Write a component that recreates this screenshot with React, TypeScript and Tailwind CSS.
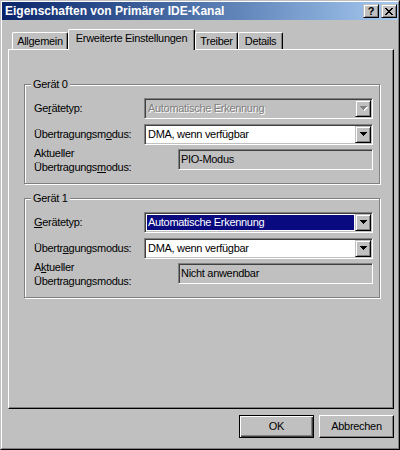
import type { ReactNode } from "react";

const sunken =
  "border border-t-[#808080] border-l-[#808080] border-r-white border-b-white shadow-[inset_1px_1px_0_#404040,inset_-1px_-1px_0_#c0c0c0]";
const raised =
  "border border-t-[#c0c0c0] border-l-[#c0c0c0] border-r-black border-b-black shadow-[inset_1px_1px_0_#fff,inset_-1px_-1px_0_#808080]";

function Arrow({ disabled }: { disabled?: boolean }) {
  const d = "M0 0h7v1H0zM1 1h5v1H1zM2 2h3v1H2zM3 3h1v1H3z";
  return (
    <svg width="8" height="5" viewBox="0 0 8 5" className="ml-px">
      {disabled && <path d={d} fill="#fff" transform="translate(1 1)" />}
      <path d={d} fill={disabled ? "#808080" : "#000"} />
    </svg>
  );
}

function Combo({ text, disabled, selected }: { text: string; disabled?: boolean; selected?: boolean }) {
  return (
    <div className={`flex h-[21px] w-[229px] ${sunken} ${disabled ? "bg-[#c0c0c0]" : "bg-white"}`}>
      <div className="flex flex-1 items-stretch my-[2px] ml-[2px] mr-[1px]">
        <div
          className={`flex flex-1 items-center pl-px ${
            selected ? "bg-[#0a0a80] text-white" : disabled ? "text-[#808080] [text-shadow:1px_1px_0_#fff]" : "text-black"
          }`}
        >
          {text}
        </div>
      </div>
      <div className={`w-[16px] my-px mr-px flex items-center justify-center bg-[#c0c0c0] ${raised}`}>
        <Arrow disabled={disabled} />
      </div>
    </div>
  );
}

function Field({ text }: { text: string }) {
  return (
    <div className={`flex h-[21px] w-[195px] items-center pl-[2px] bg-[#c0c0c0] ${sunken}`}>{text}</div>
  );
}

function Row({ label, children }: { label: ReactNode; children: ReactNode }) {
  return (
    <div className="flex h-[21px] items-center">
      <div className="w-[110px] shrink-0 leading-[13px]">{label}</div>
      {children}
    </div>
  );
}

function Group({
  title,
  typ,
  modus,
  akt,
  selected,
  disabled,
  value,
}: {
  title: string;
  typ: ReactNode;
  modus: ReactNode;
  akt: ReactNode;
  selected?: boolean;
  disabled?: boolean;
  value: string;
}) {
  return (
    <div className="relative h-[100px] border border-[#808080] shadow-[inset_1px_1px_0_#fff,1px_1px_0_#fff] pl-[9px] pt-[13px] flex flex-col">
      <div className="absolute -top-[8px] left-[6px] px-[2px] bg-[#c0c0c0] leading-[14px]">{title}</div>
      <Row label={typ}>
        <Combo text="Automatische Erkennung" disabled={disabled} selected={selected} />
      </Row>
      <div className="mt-[5px]">
        <Row label={modus}>
          <Combo text="DMA, wenn verfügbar" />
        </Row>
      </div>
      <div className="mt-[4px] flex h-[21px] items-center">
        <div className="w-[144px] shrink-0 leading-[14px]">{akt}</div>
        <Field text={value} />
      </div>
    </div>
  );
}

function Tab({ label, w, active }: { label: string; w: string; active?: boolean }) {
  return (
    <div
      className={`${w} ${
        active ? "h-[21px] -mb-px relative z-10 pb-[3px]" : "h-[17px] pt-px"
      } flex items-center justify-center bg-[#c0c0c0] rounded-t-[2px] border-t border-l border-r border-t-white border-l-white border-r-black shadow-[inset_-1px_0_0_#808080]`}
    >
      {label}
    </div>
  );
}

function Button({ label, def }: { label: string; def?: boolean }) {
  return (
    <div
      className={`w-[75px] h-[23px] flex items-center justify-center bg-[#c0c0c0] ${
        def
          ? "border border-black shadow-[inset_1px_1px_0_#fff,inset_-1px_-1px_0_#404040,inset_-2px_-2px_0_#808080]"
          : "border border-t-white border-l-white border-r-black border-b-black shadow-[inset_-1px_-1px_0_#808080]"
      }`}
    >
      {label}
    </div>
  );
}

const u = (s: string) => <u className="underline-offset-[1px]">{s}</u>;

export default function App() {
  return (
    <div className="w-[400px] h-[450px] bg-[#c0c0c0] border border-t-[#c0c0c0] border-l-[#c0c0c0] border-r-black border-b-black font-['Liberation_Sans',Arial,sans-serif] text-[11px] tracking-[-0.3px] text-black">
      <div className="h-full border border-t-white border-l-white border-r-[#808080] border-b-[#808080] flex flex-col">
        {/* title bar */}
        <div className="h-[18px] flex items-center bg-gradient-to-r from-[#0a246a] to-[#a6caf0] pl-[3px] pr-px">
          <div className="flex-1 text-white font-bold text-[12px] tracking-normal">Eigenschaften von Primärer IDE-Kanal</div>
          <div className="flex gap-[2px]">
            <div className={`w-[16px] h-[14px] flex items-center justify-center bg-[#c0c0c0] ${raised} font-bold text-[11px] leading-none tracking-normal`}>
              ?
            </div>
            <div className={`w-[16px] h-[14px] flex items-center justify-center bg-[#c0c0c0] ${raised}`}>
              <svg width="8" height="7" viewBox="0 0 8 7">
                <path
                  d="M0 0h2v1H0zM6 0h2v1H6zM1 1h2v1H1zM5 1h2v1H5zM2 2h4v1H2zM3 3h2v1H3zM2 4h4v1H2zM1 5h2v1H1zM5 5h2v1H5zM0 6h2v1H0zM6 6h2v1H6z"
                  fill="#000"
                />
              </svg>
            </div>
          </div>
        </div>

        {/* tabs */}
        <div className="mt-[9px] ml-[6px] pl-[4px] h-[20px] flex items-end">
          <Tab label="Allgemein" w="w-[56px]" />
          <Tab label="Erweiterte Einstellungen" w="w-[127px]" active />
          <Tab label="Treiber" w="w-[43px]" />
          <Tab label="Details" w="w-[45px]" />
        </div>

        {/* panel */}
        <div className="ml-[6px] mr-[4px] h-[360px] border border-t-white border-l-white border-r-black border-b-black shadow-[inset_-1px_-1px_0_#808080] pt-[34px] pl-[15px] pr-[13px] flex flex-col gap-[14px]">
          <Group
            title="Gerät 0"
            typ={<>Ge{u("r")}ätetyp:</>}
            modus={<>Übertragungsm{u("o")}dus:</>}
            akt={<>Aktueller<br />Übertragungs{u("m")}odus:</>}
            disabled
            value="PIO-Modus"
          />
          <Group
            title="Gerät 1"
            typ={<>{u("G")}erätetyp:</>}
            modus={<>Übertr{u("a")}gungsmodus:</>}
            akt={<>A{u("k")}tueller<br />Übertragungsmodus:</>}
            selected
            value="Nicht anwendbar"
          />
        </div>

        {/* buttons */}
        <div className="mt-[6px] mr-[4px] flex justify-end gap-[5px]">
          <Button label="OK" def />
          <Button label="Abbrechen" />
        </div>
      </div>
    </div>
  );
}
